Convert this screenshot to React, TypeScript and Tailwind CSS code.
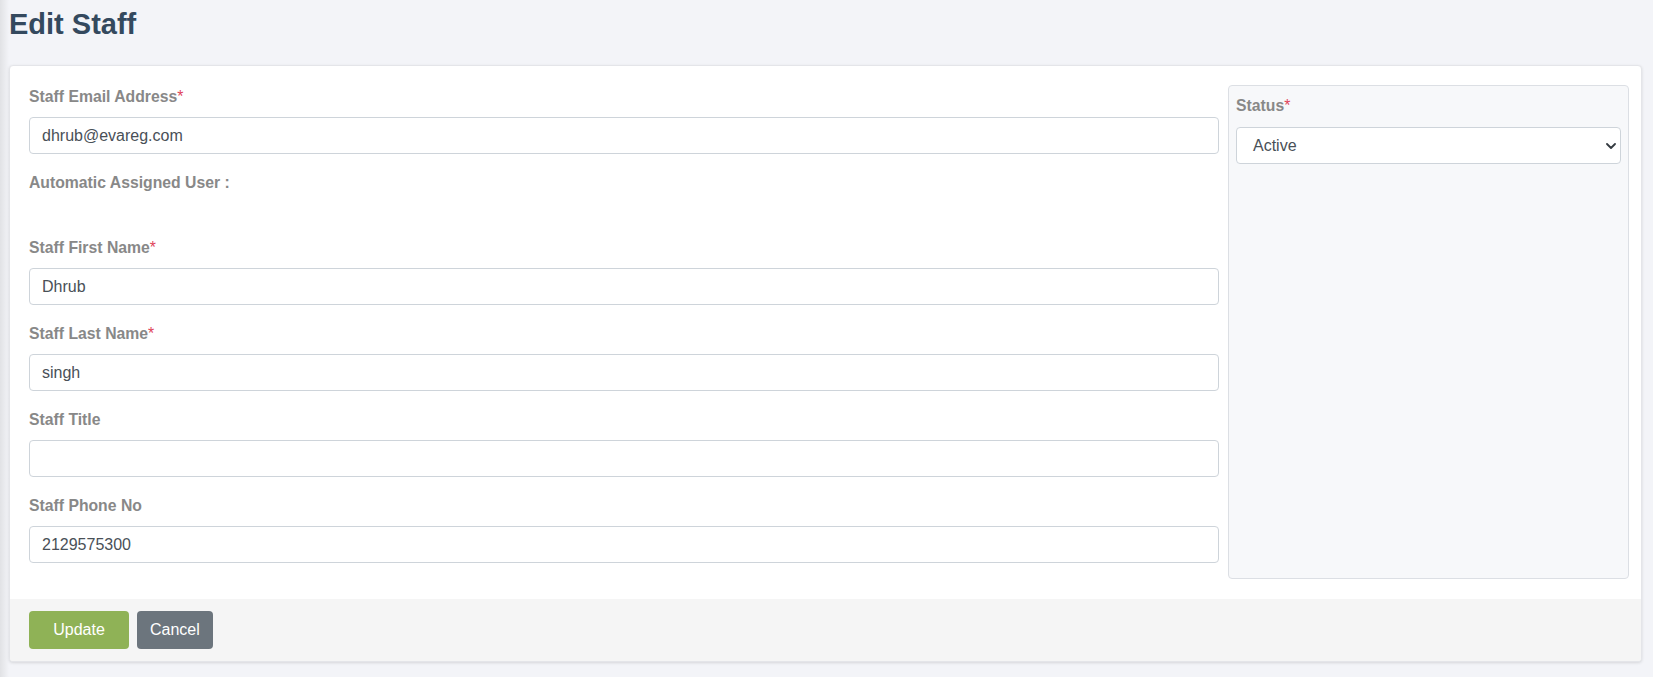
import React from 'react'

interface FieldProps {
  label: string
  value?: string
  required?: boolean
}

const font = "font-['Liberation_Sans',Arial,sans-serif]"

// 表单字段：标签 + 输入框
const Field: React.FC<FieldProps> = ({ label, value = '', required }) => (
  <div className="mb-[18px]">
    <label className="block h-[21px] mb-[10px] text-[15.75px] leading-[21px] font-bold text-[#888888]">
      {label}
      {required && <span className="font-normal text-[#e0445a]">*</span>}
    </label>
    <input
      type="text"
      defaultValue={value}
      className="block w-full h-[37px] px-[12px] rounded-[4px] border border-[#ced4da] bg-white text-[16px] text-[#495057] outline-none"
    />
  </div>
)

const App: React.FC = () => {
  return (
    <div className={`flex min-h-screen bg-[#f3f4f8] ${font}`}>
      {/* 侧栏阴影 */}
      <div className="w-[9px] shrink-0 bg-gradient-to-r from-[#e1e2e5] to-[#f3f4f8]" />

      <div className="flex-1 mr-[11px]">
        {/* 标题 */}
        <div className="h-[65px] pt-[7px]">
          <h1 className="text-[29px] leading-[34px] font-bold text-[#34495e]">Edit Staff</h1>
        </div>

        {/* 表单卡片 */}
        <div className="bg-white border border-[#e4e5e9] rounded-[4px] shadow-[0_1px_3px_rgba(0,0,0,0.12)] overflow-hidden">
          <div className="flex gap-[9px] pl-[19px] pr-[12px] pt-[20px] pb-[18px]">
            <div className="w-[1190px] shrink-0">
              <Field label="Staff Email Address" value="dhrub@evareg.com" required />

              <div className="h-[65px]">
                <div className="h-[21px] text-[15.75px] leading-[21px] font-bold text-[#888888]">
                  Automatic Assigned User :
                </div>
              </div>

              <Field label="Staff First Name" value="Dhrub" required />
              <Field label="Staff Last Name" value="singh" required />
              <Field label="Staff Title" />
              <Field label="Staff Phone No" value="2129575300" />
            </div>

            {/* 状态面板 */}
            <div className="flex-1 -mt-[1px] mb-[2px] bg-[#f7f8fa] border border-[#dcdfe4] rounded-[4px] px-[7px] pt-[9px]">
              <div className="h-[21px] mb-[11px] text-[15.75px] leading-[21px] font-bold text-[#888888]">
                Status<span className="font-normal text-[#e0445a]">*</span>
              </div>
              <div className="flex items-center justify-between h-[37px] pl-[16px] pr-[4px] rounded-[4px] border border-[#ced4da] bg-white text-[16px] text-[#495057]">
                <span>Active</span>
                <svg width="10" height="6" viewBox="0 0 10 6" fill="none">
                  <path d="M1 1l4 4 4-4" stroke="#343a40" strokeWidth="1.8" strokeLinecap="round" strokeLinejoin="round" />
                </svg>
              </div>
            </div>
          </div>

          {/* 底部按钮 */}
          <div className="flex gap-[8px] bg-[#f5f5f5] pl-[19px] py-[12px]">
            <button className="w-[100px] h-[38px] rounded-[4px] bg-[#8fb256] text-white text-[16px]">
              Update
            </button>
            <button className="h-[38px] px-[13px] rounded-[4px] bg-[#6c757d] text-white text-[16px]">
              Cancel
            </button>
          </div>
        </div>
      </div>
    </div>
  )
}

export default App
